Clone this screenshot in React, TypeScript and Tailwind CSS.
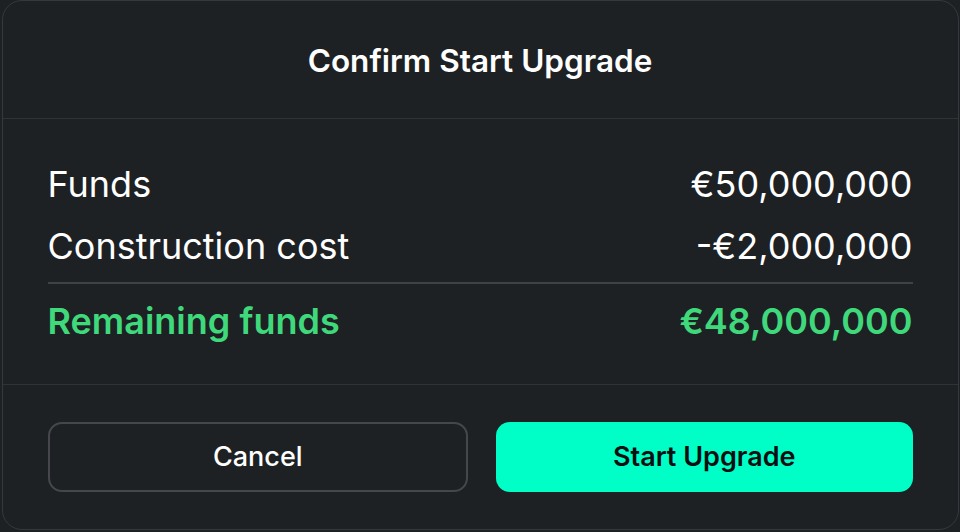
import React from "react"

const rows = [
  { label: "Funds", value: "€50,000,000" },
  { label: "Construction cost", value: "-€2,000,000" },
]

export default function App() {
  return (
    <div className="h-[532px] w-[960px] overflow-hidden bg-[#1e2124] font-['Inter',sans-serif]">
      <div className="mx-auto w-[957px] rounded-[20px] border border-[#35383d] bg-[#1e2124]">
        <header className="flex h-[118px] items-center justify-center border-b border-[#2f3237] pt-0.5">
          <h2 className="text-[31.5px] font-semibold text-white">Confirm Start Upgrade</h2>
        </header>

        <section className="px-[45px] pb-[43px] pt-[45px]">
          {rows.map((row, i) => (
            <div
              key={row.label}
              className={`flex justify-between text-[36px] leading-[40px] text-white ${i === 0 ? "mb-[22px]" : ""}`}
            >
              <span>{row.label}</span>
              <span>{row.value}</span>
            </div>
          ))}
          <div className="mb-[17px] mt-[16px] border-t-2 border-[#3e4146]" />
          <div className="flex justify-between text-[36px] font-semibold leading-[40px] text-[#3fd97c]">
            <span>Remaining funds</span>
            <span>€48,000,000</span>
          </div>
        </section>

        <footer className="flex gap-[28px] border-t border-[#2f3237] px-[45px] py-[37px]">
          <button className="h-[70px] flex-1 rounded-[14px] border-2 border-[#45474c] text-[27px] font-medium text-white">
            Cancel
          </button>
          <button className="h-[70px] flex-1 rounded-[14px] bg-[#00ffc6] text-[27px] font-semibold text-[#0b0f12]">
            Start Upgrade
          </button>
        </footer>
      </div>
      <p className="pl-[90px] text-[24px] leading-[28px] text-[#9ca3af]">construction time</p>
    </div>
  )
}
